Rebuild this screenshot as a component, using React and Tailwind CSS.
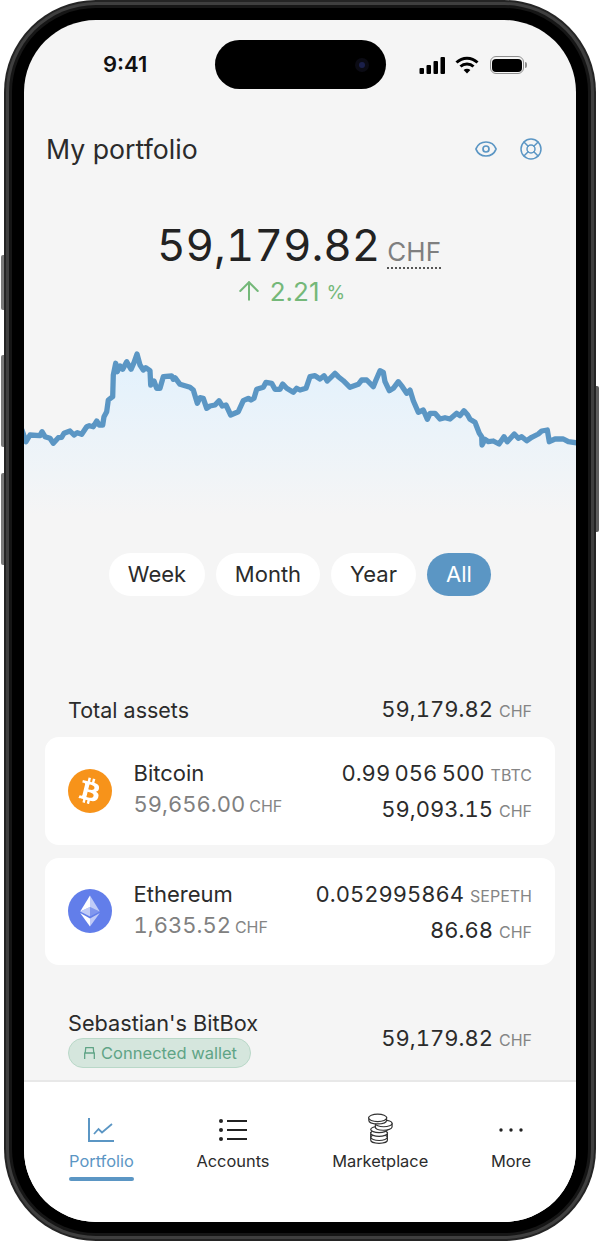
import React from 'react';
import { ArrowUp, Eye, LifeBuoy } from 'lucide-react';
import { FaBtc } from 'react-icons/fa';

const chartPoints = [
  [22, 430], [26, 441.7], [30, 435], [40, 435.7], [42, 431.7], [45, 436.7], [50, 438.3], [53.3, 443.3], [58.3, 437.7], [61.7, 437.3],
  [64, 433.3], [70, 431], [74, 435], [77.3, 432.7], [81.7, 434.3], [86.7, 426.7], [89.3, 425.7], [93.3, 426.7], [96.7, 421], [99.3, 425],
  [102.7, 425], [104, 416.7], [106.7, 411.7], [108.3, 400], [112.7, 396.7], [113.3, 375], [115.7, 363.3], [117.3, 371.7], [120, 366], [122.7, 369.3],
  [126.7, 361.7], [131, 369.3], [134, 362.7], [137, 354], [140, 365], [143.3, 370], [145.7, 367.7], [150, 370.7], [150.7, 385], [154, 381],
  [156.7, 388.3], [160, 388.3], [163.3, 376.7], [171.7, 376], [173.3, 379.3], [175, 377.7], [180, 384.3], [190, 387.3], [193.3, 390], [197.3, 403.3],
  [200, 397.7], [203.3, 398.3], [206.7, 408.3], [210, 406], [215, 405], [219, 400.7], [222.3, 406], [226, 405], [230.7, 415], [238.3, 411.7],
  [243.3, 400.7], [248.3, 398.3], [251, 400], [254, 398.3], [256.7, 389.3], [263.3, 387.3], [266, 382.3], [271.7, 383.3], [275, 389.3], [280, 389.3],
  [282.7, 384], [286.7, 388.3], [293.3, 392.3], [296.7, 388.3], [300, 390], [306, 388.3], [310, 376.7], [315, 375.7], [320, 379], [324, 375.7],
  [327.3, 381], [335, 373.3], [338.3, 376.7], [343.3, 380.7], [350, 387.3], [358.3, 384.3], [361.7, 380], [366.7, 380], [373.3, 386.7], [376, 380],
  [380, 370.7], [383.3, 372.3], [385, 381.7], [389.3, 390.7], [393.3, 388.3], [398.3, 381.7], [402.3, 386.7], [406.7, 393.3], [410, 390], [413.3, 400.7],
  [418.3, 412.3], [423.3, 410], [427.3, 419.3], [430, 413.3], [435, 413.3], [440, 419], [445, 417.7], [450, 419], [456.7, 413.3], [460, 415.7],
  [464, 410.7], [467.7, 415], [470, 419.3], [475, 422.3], [479.3, 433.3], [481.7, 436.7], [482, 445], [485, 439.3], [488.3, 441.7], [493.3, 441],
  [499, 444], [504, 436.7], [507.3, 441.7], [514.3, 434], [518.3, 438.3], [521.7, 436.7], [526.7, 440.7], [531.7, 437.3], [538.3, 434], [541.7, 431],
  [547.3, 430], [549.3, 441.7], [555, 439], [563.3, 439], [568.3, 441.7], [578, 443],
];

const line = chartPoints.map((p) => p.join(',')).join(' ');

function PriceChart() {
  return (
    <svg viewBox="24 340 552 190" className="mt-[32px] block h-[190px] w-[552px] shrink-0">
      <defs>
        <linearGradient id="chartFill" x1="0" y1="0" x2="0" y2="1">
          <stop offset="0" stopColor="#e2f1fd" />
          <stop offset="1" stopColor="#f5f5f5" />
        </linearGradient>
      </defs>
      <polygon points={`${line} 578,515 22,515`} fill="url(#chartFill)" />
      <polyline points={line} fill="none" stroke="#5b96c4" strokeWidth="5.3" strokeLinejoin="round" strokeLinecap="round" />
    </svg>
  );
}

function Amount({ value, unit, className = '' }) {
  return (
    <div className={`flex items-baseline justify-end whitespace-nowrap ${className}`}>
      <span className="text-[22px] tabular-nums text-[#2b2b2b] [word-spacing:-1.5px]">{value}</span>
      <span className="ml-[6px] text-[16px] text-[#858585]">{unit}</span>
    </div>
  );
}

function AssetCard({ icon, name, price, amount, unit, fiat }) {
  return (
    <div className="flex h-[107.5px] items-center rounded-[14px] bg-white pl-[23px] pr-[23px]">
      {icon}
      <div className="mb-[4px] ml-[21.5px] flex flex-col">
        <span className="text-[22px] leading-[28px] text-[#2b2b2b]">{name}</span>
        <div className="mt-[3px] flex items-baseline whitespace-nowrap">
          <span className="text-[22px] leading-[28px] tabular-nums text-[#808080]">{price}</span>
          <span className="ml-[4px] text-[16px] text-[#858585]">CHF</span>
        </div>
      </div>
      <div className="ml-auto mt-[4px] flex flex-col gap-[5px]">
        <Amount value={amount} unit={unit} className="leading-[29px]" />
        <Amount value={fiat} unit="CHF" className="leading-[29px]" />
      </div>
    </div>
  );
}

function StatusIcons() {
  return (
    <div className="absolute right-[49px] top-[36px] flex items-center">
      <svg width="27" height="17" viewBox="0 0 27 17" fill="#000">
        <rect x="0.5" y="11" width="4.5" height="6" rx="1" />
        <rect x="7.5" y="8" width="4.5" height="9" rx="1" />
        <rect x="14.5" y="4" width="4.5" height="13" rx="1" />
        <rect x="21.5" y="0" width="4.5" height="17" rx="1" />
      </svg>
      <svg width="24" height="18" viewBox="0 0 24 18" fill="none" stroke="#000" strokeWidth="3" className="ml-[9px]">
        <path d="M1.5 6.5C7.5 .8 16.5 .8 22.5 6.5" />
        <path d="M5.5 10.5C9 7.2 15 7.2 18.5 10.5" />
        <path d="M12 17.5L8.6 14C10.5 12.3 13.5 12.3 15.4 14Z" fill="#000" stroke="none" />
      </svg>
      <div className="ml-[11px] flex h-[18px] w-[34px] items-center justify-center rounded-[6px] border border-[#8f8f8f]">
        <div className="h-[13px] w-[30px] rounded-[4px] bg-black" />
      </div>
      <div className="ml-[1px] h-[6px] w-[2px] rounded-r-[2px] bg-[#8f8f8f]" />
    </div>
  );
}

function RangePill({ label, active, className }) {
  return (
    <div className={`flex h-[43px] items-center justify-center rounded-full text-[22px] ${active ? 'bg-[#5b96c4] text-white' : 'bg-white text-[#2b2b2b]'} ${className}`}>
      {label}
    </div>
  );
}

function NavItem({ icon, label, active }) {
  return (
    <div className="relative flex flex-col items-center">
      <div className="flex h-[34px] items-center justify-center">{icon}</div>
      <span className={`mt-[3px] text-[16.4px] leading-[22px] ${active ? 'text-[#5b96c4]' : 'text-[#2b2b2b]'}`}>{label}</span>
      {active && <div className="absolute left-0 right-0 top-[64px] h-[4px] rounded-full bg-[#5b96c4]" />}
    </div>
  );
}

export default function App() {
  return (
    <div className="relative h-[1243px] w-[600px] overflow-hidden bg-white font-['Inter',sans-serif]">
      {/* side buttons */}
      <div className="absolute left-[1px] top-[255px] h-[55px] w-[4px] rounded-l-[2px] bg-[#7a7a7a]" />
      <div className="absolute left-[1px] top-[355px] h-[92px] w-[4px] rounded-l-[2px] bg-[#7a7a7a]" />
      <div className="absolute left-[1px] top-[473px] h-[92px] w-[4px] rounded-l-[2px] bg-[#7a7a7a]" />
      <div className="absolute left-[595px] top-[386px] h-[146px] w-[4px] rounded-r-[2px] bg-[#5e5e5e]" />

      {/* phone body */}
      <div className="relative ml-[4px] h-[1241px] w-[592px] rounded-[92px] bg-[#242424] p-[2px]">
        <div className="h-full w-full rounded-[90px] bg-[#3f3f3f] p-[3px]">
          <div className="h-full w-full rounded-[87px] bg-[#161616] p-[3px]">
            <div className="h-full w-full rounded-[84px] bg-black px-[12px] pb-[11px] pt-[12px]">
              <div className="relative flex h-[1202px] w-[552px] flex-col overflow-hidden rounded-[72px] bg-[#f5f5f5]">
                {/* status bar */}
                <div className="h-[88px] shrink-0 pl-[79px] pt-[31px] text-[22px] font-semibold leading-[26px] text-[#111]">9:41</div>
                <div className="absolute left-[191px] top-[20px] flex h-[49px] w-[171px] items-center justify-end rounded-full bg-black pr-[17px]">
                  <div className="flex h-[14px] w-[14px] items-center justify-center rounded-full bg-[#0b0b14]">
                    <div className="h-[6px] w-[6px] rounded-full bg-[#1a1f4a]" />
                  </div>
                </div>
                <StatusIcons />

                {/* header */}
                <div className="mt-[20px] flex h-[42px] shrink-0 items-center pl-[22px] pr-[33px]">
                  <span className="text-[26.7px] text-[#2b2b2b]">My portfolio</span>
                  <Eye size={24} strokeWidth={1.7} className="ml-auto text-[#5b96c4]" />
                  <LifeBuoy size={24} strokeWidth={1.5} className="ml-[21px] text-[#5b96c4]" />
                </div>

                {/* balance */}
                <div className="mt-[46px] flex h-[58px] shrink-0 items-baseline justify-center pr-[2px]">
                  <span className="text-[44px] leading-[58px] tabular-nums text-[#222222]">59,179.82</span>
                  <span className="ml-[7px] border-b-2 border-dotted border-[#555] text-[26px] leading-[30px] text-[#7f7f7f]">CHF</span>
                </div>
                <div className="flex h-[34px] shrink-0 items-center justify-center pr-[21px] text-[#74b879]">
                  <ArrowUp size={30} strokeWidth={1.6} />
                  <span className="ml-[6px] text-[26px]">2.21</span>
                  <span className="ml-[7px] mt-[4px] text-[19px]">%</span>
                </div>

                <PriceChart />

                {/* range */}
                <div className="mt-[23px] flex h-[43px] shrink-0 justify-center gap-[11px]">
                  <RangePill label="Week" className="w-[96px]" />
                  <RangePill label="Month" className="w-[104px]" />
                  <RangePill label="Year" className="w-[85px]" />
                  <RangePill label="All" active className="w-[64px]" />
                </div>

                {/* total */}
                <div className="mt-[99px] flex h-[30px] shrink-0 items-center justify-between pl-[44px] pr-[44px]">
                  <span className="text-[21.5px] text-[#2b2b2b]">Total assets</span>
                  <Amount value="59,179.82" unit="CHF" className="mb-[2px]" />
                </div>

                {/* assets */}
                <div className="mx-[21px] mt-[12px] flex shrink-0 flex-col gap-[13px]">
                  <AssetCard
                    icon={
                      <div className="flex h-[44px] w-[44px] shrink-0 items-center justify-center rounded-full bg-[#f7931a] text-white">
                        <FaBtc size={26} className="rotate-[14deg]" />
                      </div>
                    }
                    name="Bitcoin"
                    price="59,656.00"
                    amount="0.99 056 500"
                    unit="TBTC"
                    fiat="59,093.15"
                  />
                  <AssetCard
                    icon={
                      <svg width="44" height="44" viewBox="0 0 44 44" className="shrink-0">
                        <circle cx="22" cy="22" r="22" fill="#627eea" />
                        <path d="M22 6.5V18l9.8 4.4Z" fill="#fff" fillOpacity="0.6" />
                        <path d="M22 6.5 12.2 22.4 22 18Z" fill="#fff" />
                        <path d="M22 29.5V37.5L31.8 24Z" fill="#fff" fillOpacity="0.6" />
                        <path d="M22 29.5V37.5L12.2 24Z" fill="#fff" />
                        <path d="M22 27.6 31.8 22.4 22 18Z" fill="#fff" fillOpacity="0.2" />
                        <path d="M12.2 22.4 22 27.6V18Z" fill="#fff" fillOpacity="0.6" />
                      </svg>
                    }
                    name="Ethereum"
                    price="1,635.52"
                    amount="0.052995864"
                    unit="SEPETH"
                    fiat="86.68"
                  />
                </div>

                {/* wallet */}
                <div className="mt-[44px] flex shrink-0 items-center justify-between pl-[44px] pr-[44px]">
                  <div className="flex flex-col items-start">
                    <span className="text-[21.7px] leading-[28px] text-[#2b2b2b]">Sebastian's BitBox</span>
                    <div className="mt-[1px] flex h-[30px] w-[183px] items-center justify-center gap-[4px] rounded-full border border-[#b9d8c8] bg-[#d5e6dd] text-[16.5px] text-[#5fa486]">
                      <svg width="15" height="14" viewBox="0 0 14 13" fill="none" stroke="#5fa486" strokeWidth="1.2">
                        <path d="M3 6.5 3.5 1.5h7L11 6.5M2 6.5h10M2.5 6.5V12M11.5 6.5V12" />
                      </svg>
                      Connected wallet
                    </div>
                  </div>
                  <Amount value="59,179.82" unit="CHF" />
                </div>

                {/* bottom nav */}
                <div className="mt-auto flex h-[142px] shrink-0 justify-between border-t-2 border-[#e8e8e8] bg-white px-[45px] pt-[31px]">
                  <NavItem
                    active
                    label="Portfolio"
                    icon={
                      <svg width="26" height="24" viewBox="0 0 26 24" fill="none" stroke="#5b96c4" strokeWidth="2">
                        <path d="M1 0V23H26" />
                        <path d="M6 16 10.5 11 14 14.5 24 6" strokeWidth="1.8" />
                      </svg>
                    }
                  />
                  <NavItem
                    label="Accounts"
                    icon={
                      <svg width="28" height="22" viewBox="0 0 28 22" fill="#222">
                        <circle cx="2" cy="2" r="2" />
                        <circle cx="2" cy="11" r="2" />
                        <circle cx="2" cy="20" r="2" />
                        <rect x="8" y="1" width="20" height="2" />
                        <rect x="8" y="10" width="20" height="2" />
                        <rect x="8" y="19" width="20" height="2" />
                      </svg>
                    }
                  />
                  <NavItem
                    label="Marketplace"
                    icon={
                      <svg width="26" height="31" viewBox="0 0 28 33" fill="#fff" stroke="#333" strokeWidth="1.3" className="-mt-[3px]">
                        <path d="M4 21v8c0 2 4 3.5 9 3.5s9-1.5 9-3.5v-8Z" />
                        <ellipse cx="13" cy="26" rx="9" ry="3.4" fill="none" />
                        <ellipse cx="13" cy="21.5" rx="9" ry="3.4" />
                        <ellipse cx="13" cy="17.5" rx="9" ry="3.4" />
                        <path d="M9 11v4c0 2 3.8 3.4 8.5 3.4S27 17 27 15v-4Z" />
                        <ellipse cx="18" cy="11" rx="9" ry="3.6" />
                        <path d="M2 5v3c0 2 4 3.6 9.5 3.6S21 10 21 8V5Z" />
                        <ellipse cx="11.5" cy="5" rx="9.8" ry="4" />
                      </svg>
                    }
                  />
                  <NavItem
                    label="More"
                    icon={
                      <svg width="24" height="4" viewBox="0 0 24 4" fill="#222">
                        <circle cx="2" cy="2" r="1.7" />
                        <circle cx="12" cy="2" r="1.7" />
                        <circle cx="22" cy="2" r="1.7" />
                      </svg>
                    }
                  />
                </div>
              </div>
            </div>
          </div>
        </div>
      </div>
    </div>
  );
}
